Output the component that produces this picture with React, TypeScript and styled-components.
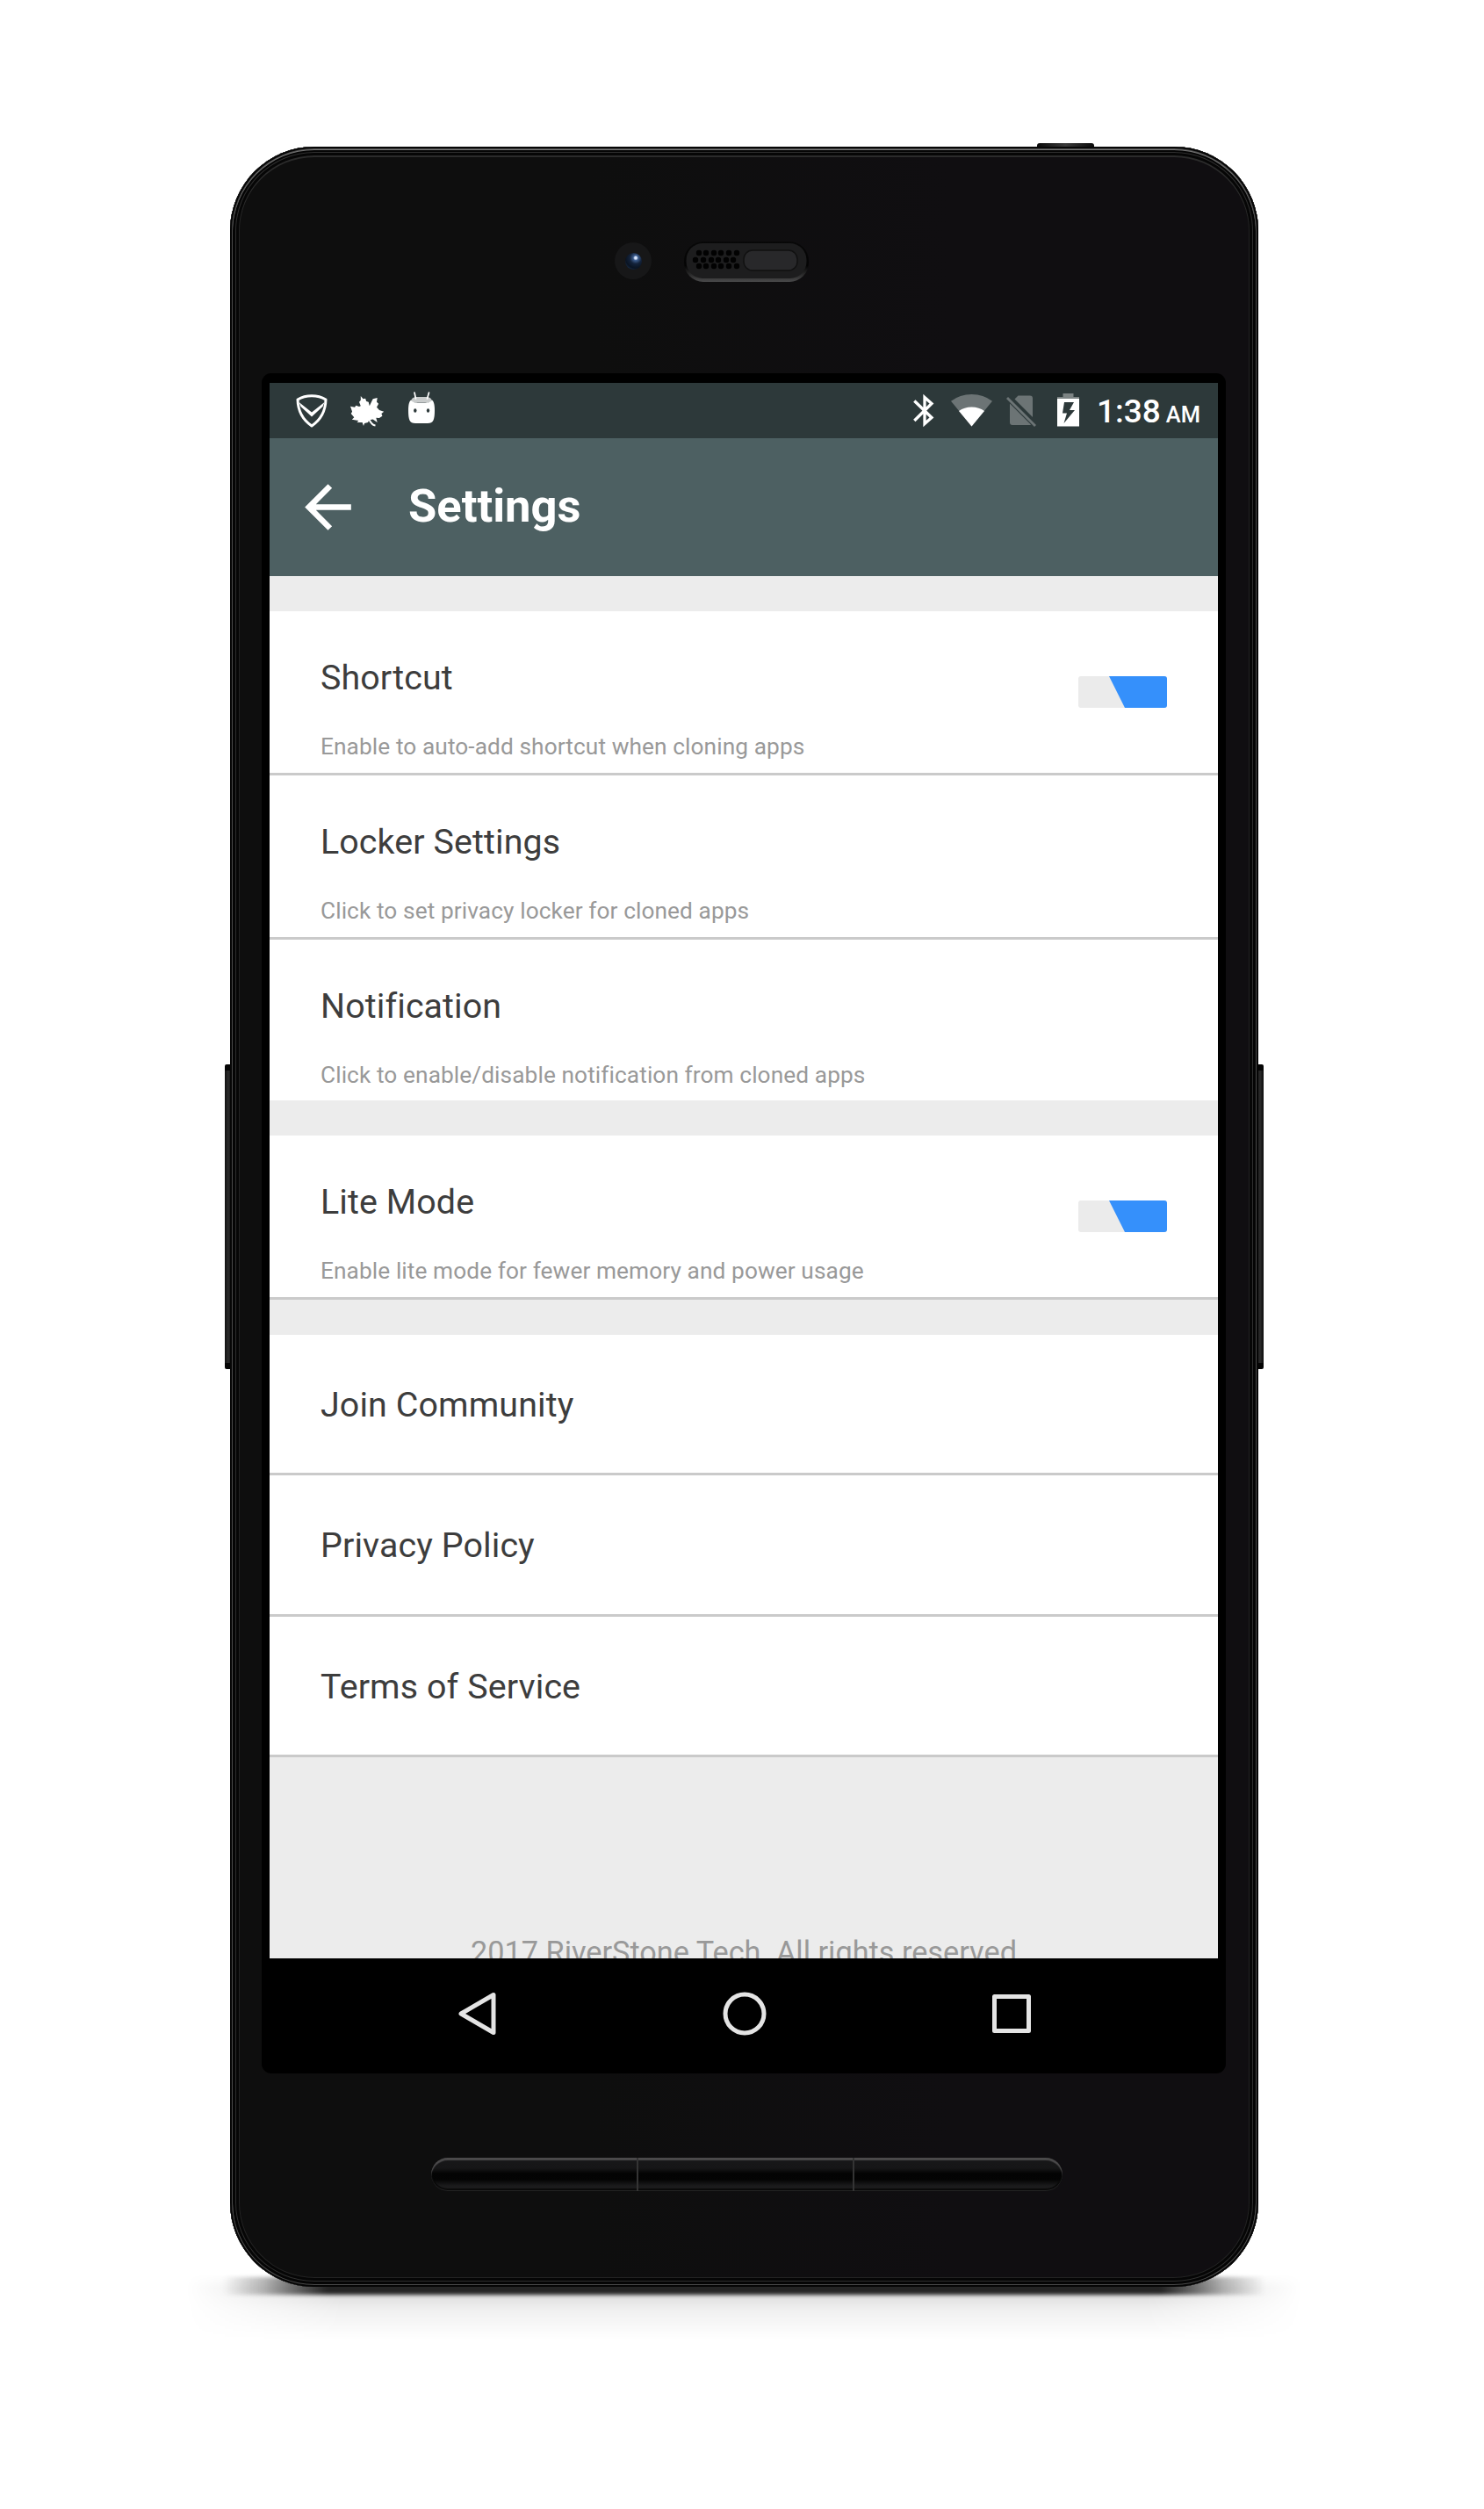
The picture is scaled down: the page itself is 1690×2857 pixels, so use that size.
import React from "react";
import styled, { createGlobalStyle, css } from "styled-components";

const GlobalStyle = createGlobalStyle`
  * { box-sizing: border-box; }
  body { margin: 0; background: #fff; font-family: Roboto, "Noto Sans", sans-serif; }
`;

const Page = styled.main`
  width: 1690px;
  height: 2857px;
  padding: 167px 0 0 262px;
  overflow: hidden;
  background: #fff;
`;

const Device = styled.div`
  position: relative;
  width: 1171px;
  height: 2437px;
`;

const GroundShadow = styled.div`
  position: absolute;
  left: -8px;
  right: -8px;
  bottom: -9px;
  height: 20px;
  background: linear-gradient(90deg, transparent 0, rgba(36, 36, 36, 0.3) 4%, #242424 10%, #242424 90%, rgba(36, 36, 36, 0.3) 96%, transparent);
  filter: blur(2px);
`;

const SoftShadow = styled.div`
  position: absolute;
  left: -50px;
  right: -50px;
  bottom: -60px;
  height: 75px;
  background: linear-gradient(rgba(0, 0, 0, 0) 0, rgba(0, 0, 0, 0.16) 22%, rgba(0, 0, 0, 0.06) 55%, rgba(0, 0, 0, 0));
  mask-image: linear-gradient(90deg, transparent 0, #000 14%, #000 86%, transparent);
`;

const SideKey = styled.div<{ $side: "left" | "right" }>`
  position: absolute;
  top: 1045px;
  ${(p) => p.$side}: -6px;
  width: 8px;
  height: 347px;
  border-radius: 2px;
  background: linear-gradient(90deg, #111, #2c2c2c 50%, #0a0a0a);
  border-top: 7px solid #050505;
  border-bottom: 7px solid #050505;
`;

const PowerKey = styled.div`
  position: absolute;
  top: -4px;
  left: 919px;
  width: 65px;
  height: 7px;
  border-radius: 3px 3px 0 0;
  background: linear-gradient(90deg, #0a0a0a, #3a3a3a 50%, #0a0a0a);
`;

const Body = styled.div`
  position: relative;
  width: 100%;
  height: 100%;
  display: flex;
  flex-direction: column;
  align-items: flex-start;
  border-radius: 96px;
  background: linear-gradient(90deg, #0e0e0e 35%, #100e11 70%);
  box-shadow: inset 0 0 0 2px #060606, inset 0 0 0 3px #4a4a4a, inset 0 1px 0 3px #777,
    inset 0 0 0 6px #050505, inset 0 0 0 7px #2e2e2e, inset 0 0 0 10px #060606,
    inset 0 2px 0 10px #2b2b2b, inset 0 0 0 11px #232323;
`;

const TopBezel = styled.div`
  width: 100%;
  height: 258px;
  padding: 106px 0 0 438px;
  display: flex;
  gap: 37px;
  align-items: flex-start;
`;

const CameraRing = styled.div`
  width: 42px;
  height: 42px;
  margin: 3px 0 0;
  border-radius: 50%;
  display: flex;
  align-items: center;
  justify-content: center;
  background: #171718;
`;

const Lens = styled.div`
  width: 19px;
  height: 19px;
  border-radius: 50%;
  background: radial-gradient(circle at 63% 30%, #dbe8ff 0 7%, #3c5c8c 16%, #13223a 38%, #0a1422 65%, #1a2f4e 84%, #10151d);
`;

const Glass = styled.div`
  width: 1098px;
  height: 1936px;
  margin-left: 36px;
  padding: 11px 9px 5px;
  border-radius: 11px;
  background: #000;
`;

const Screen = styled.div`
  width: 1080px;
  height: 1920px;
  display: flex;
  flex-direction: column;
  overflow: hidden;
  background: #ececec;
`;

const StatusBar = styled.header`
  flex: none;
  height: 63px;
  padding: 0 20px 0 30px;
  display: flex;
  align-items: center;
  justify-content: space-between;
  background: #2d393a;
  color: #fff;
`;

const StatusGroup = styled.div<{ $gap: number }>`
  height: 63px;
  display: flex;
  gap: ${(p) => p.$gap}px;
`;

const StatusSvg = styled.svg<{ $lead?: number }>`
  display: block;
  flex: none;
  overflow: visible;
  margin-left: ${(p) => p.$lead ?? 0}px;
`;

const Clock = styled.div`
  width: 120px;
  margin-left: 2px;
  display: flex;
  align-items: baseline;
  justify-content: flex-end;
  font-size: 37px;
  font-weight: 500;
  line-height: 66px;
  white-space: nowrap;
`;

const Meridiem = styled.span`
  margin-left: 6px;
  font-size: 25.5px;
`;

const Toolbar = styled.div`
  flex: none;
  height: 157px;
  padding: 0 27px;
  display: flex;
  align-items: center;
  background: #4d6062;
  color: #fff;
`;

const Title = styled.h1`
  margin: 0 0 0 52px;
  font-size: 52.5px;
  line-height: 62px;
  font-weight: 700;
  padding-bottom: 4px;
`;

const List = styled.div`
  flex: 1;
  min-height: 0;
  overflow: hidden;
`;

const Gap = styled.div`
  height: 40px;
  background: #ececec;
`;

const Row = styled.section<{ $divided?: boolean; $height: number }>`
  height: ${(p) => p.$height}px;
  padding: 0 58px;
  display: flex;
  align-items: center;
  justify-content: space-between;
  background: #fff;
  ${(p) => p.$divided && css`border-bottom: 3px solid #cacaca;`}
`;

const Labels = styled.div`
  height: 184px;
  padding-top: 53px;
`;

const Label = styled.div<{ $single?: boolean }>`
  padding-top: ${(p) => (p.$single ? 2 : 0)}px;
  font-size: 39.375px;
  line-height: 46px;
  letter-spacing: 0.11px;
  color: #3d3d3d;
  white-space: nowrap;
`;

const Hint = styled.div`
  margin-top: 40px;
  font-size: 26.25px;
  line-height: 31px;
  letter-spacing: 0.09px;
  color: #999;
  white-space: nowrap;
`;

const Toggle = styled.div`
  width: 101px;
  height: 36px;
  border-radius: 3px;
  overflow: hidden;
  background: #ebebeb;
`;

const ToggleFill = styled.div`
  width: 101px;
  height: 36px;
  background: #3590fb;
  clip-path: polygon(35px 0, 100% 0, 100% 100%, 53px 100%);
`;

const Footer = styled.footer`
  padding-top: 202px;
  text-align: center;
  font-size: 34.25px;
  line-height: 40px;
  color: #999;
  white-space: nowrap;
`;

const NavBar = styled.nav`
  flex: none;
  height: 126px;
  padding: 0 210px 0 212px;
  display: flex;
  align-items: center;
  justify-content: space-between;
  background: #000;
`;

const Chin = styled.div`
  width: 719px;
  height: 38px;
  margin: 96px 0 0 229px;
  display: grid;
  grid-template-columns: 236px 246px 1fr;
  border-radius: 19px;
  overflow: hidden;
  background: linear-gradient(#171718 6px, #161617 12px, #030303 18px, #040404 25px, #1b1b1c 32px, #1b1b1c 38px);
  box-shadow: inset 0 3px 1px #4b4a4b, inset 0 -1px 0 #232324, inset 0 -2px 0 1px #0a0a0a;
`;

const ChinKey = styled.div<{ $seam?: boolean }>`
  border-right: ${(p) => (p.$seam ? "2px solid #343434" : "none")};
`;

function Shield() {
  return (
    <StatusSvg width="36" height="63" viewBox="0 0 36 63" fill="none" stroke="#fff">
      <path d="M18 14.800C12 14.800 7 16 2 19C2.300 32 8.500 42.500 18 49C27.500 42.500 33.700 32 34 19C29 16 24 14.800 18 14.800Z" strokeWidth="3" strokeLinejoin="round" />
      <path d="M3.500 22L18 33.500L32.500 22L30.500 27L18 38.500L5.500 27Z" fill="#fff" stroke="none" />
    </StatusSvg>
  );
}

function Leaf() {
  return (
    <StatusSvg width="39" height="63" viewBox="0 0 39 63" fill="#fff">
      <path d="M11.800 15L14.600 18.300L17.100 17.700L18.200 21L20.700 21.700L21.800 26.300L24.300 21L25.700 18.300L30.700 17L30 21.700L32.100 23.700L30 27.700L33 31L38.200 32.700L35.400 35L36.400 37.700L32.900 40L29.300 39.700L30.700 45L25.700 41.500L21.400 42.300L20 45L16.100 46L15 49L13.600 45L7.500 45L9.300 43L1.800 41.700L4.300 39.300L0.700 35L2.100 32.700L0 26.700L5 27.700L6.400 25.700L10 27L11.800 26.300L10 21.700L11.800 19.700Z" />
      <path d="M21.500 42C23 45 24.500 48 28.500 48.500" fill="none" stroke="#fff" strokeWidth="2" />
    </StatusSvg>
  );
}

function DroidJar() {
  return (
    <StatusSvg $lead={1} width="30" height="63" viewBox="0 0 30 63">
      <path d="M2.500 22Q3.500 16 9 16H21Q26.500 16 27.500 22Z" fill="#c9cccc" />
      <path d="M7 11L8.500 18M23.500 11L21.500 18" stroke="#fff" strokeWidth="1.700" strokeLinecap="round" />
      <path d="M3 19.500C4 22.500 9 22.500 15 22.500S26 22.500 27 19.500C29 21 30 25 30 31C30 42 28.500 46 22 46H8C1.500 46 0 42 0 31C0 25 1 21 3 19.500Z" fill="#fff" />
      <ellipse cx="7.800" cy="31.500" rx="1.700" ry="2.300" fill="#2d393a" />
      <ellipse cx="22.500" cy="31.500" rx="1.700" ry="2.300" fill="#2d393a" />
    </StatusSvg>
  );
}

function Bluetooth() {
  return (
    <StatusSvg width="24" height="63" viewBox="0 0 24 63" fill="none" stroke="#fff" strokeWidth="3.300">
      <path d="M1.300 20.500L21 39.500L13 46.500V16.500L21 23.500L1.300 43" />
    </StatusSvg>
  );
}

function Wifi() {
  return (
    <StatusSvg $lead={3} width="47" height="63" viewBox="0 0 47 63">
      <path d="M0 20.800Q10 13 23.500 13T47 20.800L23.500 49.500Z" fill="#6c7475" />
      <path d="M9 32Q15 27.500 23.500 27.500T38 32L23.500 49.500Z" fill="#fff" />
    </StatusSvg>
  );
}

function NoSim() {
  return (
    <StatusSvg width="34" height="63" viewBox="0 0 34 63" fill="#6c7475">
      <path d="M9.500 18.500L13.500 14.500H27Q30 14.500 30 17.500V39ZM4 23.500L28 47.500Q27.500 48 26 48H7Q4 48 4 45Z" />
      <path d="M1 17L33 49" stroke="#6c7475" strokeWidth="2.800" />
    </StatusSvg>
  );
}

function Battery() {
  return (
    <StatusSvg $lead={8} width="25" height="63" viewBox="0 0 25 63">
      <path d="M6.500 12H18.500V16H25V19H0V16H6.500Z" fill="#7d8484" />
      <path fillRule="evenodd" d="M0 18H25V49.500H0ZM8 22L6 34.500H11L7.500 46L20 31H14L19 22Z" fill="#fff" />
    </StatusSvg>
  );
}

const BackArrow = () => (
  <StatusSvg width="79" height="79" viewBox="0 0 24 24" fill="#fff">
    <path d="M20 11H7.830l5.590-5.590L12 4l-8 8 8 8 1.410-1.410L7.830 13H20z" />
  </StatusSvg>
);

const holes = [
  [17, 12], [25, 12], [34, 12], [42, 12], [51, 12], [60, 12],
  [13, 20], [22, 20], [31, 20], [39, 20], [48, 20], [56, 20],
  [17, 27], [25, 27], [34, 27], [42, 27], [51, 27], [60, 27],
];

function Earpiece() {
  return (
    <StatusSvg width="142" height="48" viewBox="0 0 142 48">
      <defs>
        <linearGradient id="rim" x1="0" y1="0" x2="0" y2="1">
          <stop offset="0" stopColor="#080808" />
          <stop offset=".6" stopColor="#040404" />
          <stop offset="1" stopColor="#4a4a4b" />
        </linearGradient>
      </defs>
      <rect x="0" y="2" width="142" height="46" rx="22" fill="url(#rim)" />
      <rect x="2.500" y="4" width="137" height="40" rx="19" fill="#1d1d1e" />
      <rect x="68" y="12" width="61" height="23" rx="10" fill="#28282a" stroke="#111" strokeWidth="1.500" />
      {holes.map(([x, y]) => (
        <circle key={`${x}-${y}`} cx={x} cy={y + 3} r="3.200" fill="#020202" />
      ))}
    </StatusSvg>
  );
}

function Switch() {
  return (
    <Toggle role="switch" aria-checked="true">
      <ToggleFill />
    </Toggle>
  );
}

type SettingProps = { label: string; hint: string; height: number; divided?: boolean; toggle?: boolean };

function Setting({ label, hint, height, divided, toggle }: SettingProps) {
  return (
    <Row $height={height} $divided={divided}>
      <Labels>
        <Label>{label}</Label>
        <Hint>{hint}</Hint>
      </Labels>
      {toggle && <Switch />}
    </Row>
  );
}

export default function App() {
  return (
    <Page>
      <GlobalStyle />
      <Device>
        <SoftShadow />
        <GroundShadow />
        <SideKey $side="left" />
        <SideKey $side="right" />
        <PowerKey />
        <Body>
          <TopBezel>
            <CameraRing>
              <Lens />
            </CameraRing>
            <Earpiece />
          </TopBezel>
          <Glass>
            <Screen>
              <StatusBar>
                <StatusGroup $gap={26}>
                  <Shield />
                  <Leaf />
                  <DroidJar />
                </StatusGroup>
                <StatusGroup $gap={16}>
                  <Bluetooth />
                  <Wifi />
                  <NoSim />
                  <Battery />
                  <Clock>
                    1:38<Meridiem>AM</Meridiem>
                  </Clock>
                </StatusGroup>
              </StatusBar>
              <Toolbar>
                <BackArrow />
                <Title>Settings</Title>
              </Toolbar>
              <List>
                <Gap />
                <Setting label="Shortcut" hint="Enable to auto-add shortcut when cloning apps" height={187} divided toggle />
                <Setting label="Locker Settings" hint="Click to set privacy locker for cloned apps" height={187} divided />
                <Setting label="Notification" hint="Click to enable/disable notification from cloned apps" height={183} />
                <Gap />
                <Setting label="Lite Mode" hint="Enable lite mode for fewer memory and power usage" height={187} divided toggle />
                <Gap />
                <Row $height={160} $divided>
                  <Label $single>Join Community</Label>
                </Row>
                <Row $height={161} $divided>
                  <Label $single>Privacy Policy</Label>
                </Row>
                <Row $height={160} $divided>
                  <Label $single>Terms of Service</Label>
                </Row>
                <Footer>2017 RiverStone Tech. All rights reserved</Footer>
              </List>
              <NavBar>
                <StatusSvg width="50" height="50" viewBox="0 0 50 50" fill="none" stroke="#e4e4e4" strokeWidth="5" strokeLinejoin="round">
                  <path d="M43 3.500V46.500L6 25Z" />
                </StatusSvg>
                <StatusSvg width="50" height="50" viewBox="0 0 50 50" fill="none" stroke="#e4e4e4" strokeWidth="5">
                  <circle cx="25" cy="25" r="22" />
                </StatusSvg>
                <StatusSvg width="50" height="50" viewBox="0 0 50 50" fill="none" stroke="#e4e4e4" strokeWidth="5" strokeLinejoin="round">
                  <rect x="5.500" y="5.500" width="39" height="39" />
                </StatusSvg>
              </NavBar>
            </Screen>
          </Glass>
          <Chin>
            <ChinKey $seam />
            <ChinKey $seam />
            <ChinKey />
          </Chin>
        </Body>
      </Device>
    </Page>
  );
}
